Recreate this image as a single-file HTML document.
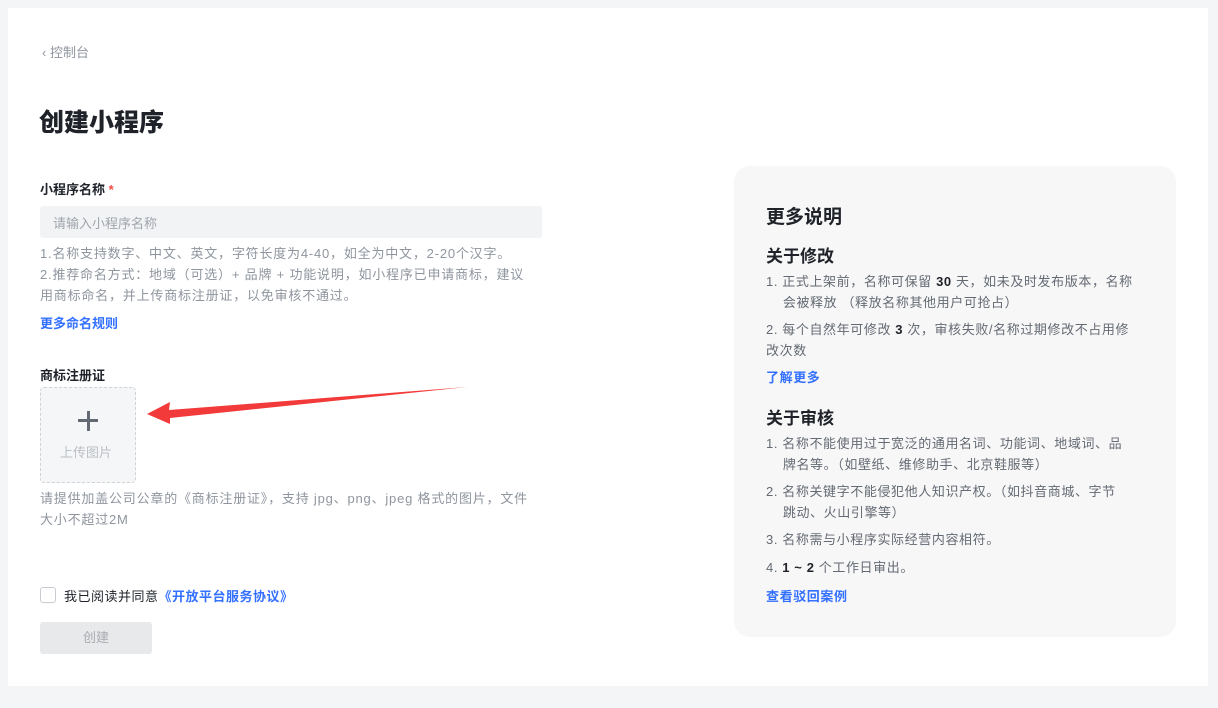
<!DOCTYPE html>
<html><head><meta charset="utf-8"><style>
*{margin:0;padding:0;box-sizing:border-box}
body{width:1218px;height:708px;background:#f4f5f6;font-family:"Liberation Sans","Noto Sans CJK SC",sans-serif;position:relative;overflow:hidden;color:#1f2329}
.card{position:absolute;left:8px;top:8px;width:1200px;height:678px;background:#fff}
.a{position:absolute;white-space:nowrap}
.g{color:#8f959e;font-size:13px;line-height:21px;letter-spacing:0.8px}
.blue{color:#3370ff !important;font-weight:bold;font-size:13px}
.panel{position:absolute;left:734px;top:166px;width:442px;height:471px;background:#f7f7f7;border-radius:16px}
.p{position:absolute;left:32px;font-size:13px;line-height:21px;color:#646a73;white-space:nowrap;letter-spacing:0.6px}
.p b{color:#1f2329}
.h{position:absolute;left:32px;font-size:17px;font-weight:bold;color:#1f2329}
</style></head><body>
<div class="card"></div>
<div class="a" style="left:42px;top:42px;font-size:13px;color:#8f959e">‹&nbsp;控制台</div>
<div class="a" style="left:39px;top:103px;font-size:25px;font-weight:900;color:#1f2329">创建小程序</div>
<div class="a" style="left:40px;top:179px;font-size:13px;font-weight:bold">小程序名称 <span style="color:#f54a45">*</span></div>
<div class="a" style="left:40px;top:206px;width:502px;height:32px;background:#f2f3f5;border-radius:3px;font-size:13px;color:#a0a5ac;padding:7px 13px">请输入小程序名称</div>
<div class="a g" style="left:40px;top:243px">1.名称支持数字、中文、英文，字符长度为4-40，如全为中文，2-20个汉字。<br>2.推荐命名方式：地域（可选）+ 品牌 + 功能说明，如小程序已申请商标，建议<br>用商标命名，并上传商标注册证，以免审核不通过。</div>
<div class="a blue" style="left:40px;top:313px">更多命名规则</div>
<div class="a" style="left:40px;top:365px;font-size:13px;font-weight:bold">商标注册证</div>
<div class="a" style="left:40px;top:387px;width:96px;height:96px;background:#f5f6f7;border:1px dashed #d0d3d6;border-radius:4px">
<div class="a" style="left:37px;top:31px;width:20px;height:3px;background:#646a73"></div>
<div class="a" style="left:45.5px;top:23px;width:3px;height:20px;background:#646a73"></div>
<div class="a" style="left:19px;top:54px;font-size:13px;color:#bbbfc4">上传图片</div>
</div>
<svg class="a" style="left:0;top:0" width="1218" height="708"><polygon points="147,414 170,402 169,410 467,387 170,418 170,424" fill="#f33a3a"/></svg>
<div class="a g" style="left:40px;top:488px">请提供加盖公司公章的《商标注册证》，支持 jpg、png、jpeg 格式的图片，文件<br>大小不超过2M</div>
<div class="a" style="left:40px;top:587px;width:16px;height:16px;border:1px solid #c9ccd0;border-radius:3px;background:#fff"></div>
<div class="a" style="left:64px;top:586px;font-size:13px;color:#1f2329;letter-spacing:0.5px">我已阅读并同意<span style="color:#3370ff;font-weight:bold">《开放平台服务协议》</span></div>
<div class="a" style="left:40px;top:622px;width:112px;height:32px;background:#e8e9eb;border-radius:3px;color:#a8abb0;font-size:13px;text-align:center;line-height:32px">创建</div>
<div class="panel">
<div class="h" style="top:36px;font-size:19px">更多说明</div>
<div class="h" style="top:76px">关于修改</div>
<div class="p" style="top:105px">1. 正式上架前，名称可保留 <b>30</b> 天，如未及时发布版本，名称<br>&nbsp;&nbsp;&nbsp; 会被释放 （释放名称其他用户可抢占）</div>
<div class="p" style="top:153px">2. 每个自然年可修改 <b>3</b> 次，审核失败/名称过期修改不占用修<br>改次数</div>
<div class="p blue" style="top:201px">了解更多</div>
<div class="h" style="top:238px">关于审核</div>
<div class="p" style="top:267px">1. 名称不能使用过于宽泛的通用名词、功能词、地域词、品<br>&nbsp;&nbsp;&nbsp; 牌名等。（如壁纸、维修助手、北京鞋服等）</div>
<div class="p" style="top:315px">2. 名称关键字不能侵犯他人知识产权。（如抖音商城、字节<br>&nbsp;&nbsp;&nbsp; 跳动、火山引擎等）</div>
<div class="p" style="top:363px">3. 名称需与小程序实际经营内容相符。</div>
<div class="p" style="top:391px">4. <b>1 ~ 2</b> 个工作日审出。</div>
<div class="p blue" style="top:420px">查看驳回案例</div>
</div>
</body></html>
